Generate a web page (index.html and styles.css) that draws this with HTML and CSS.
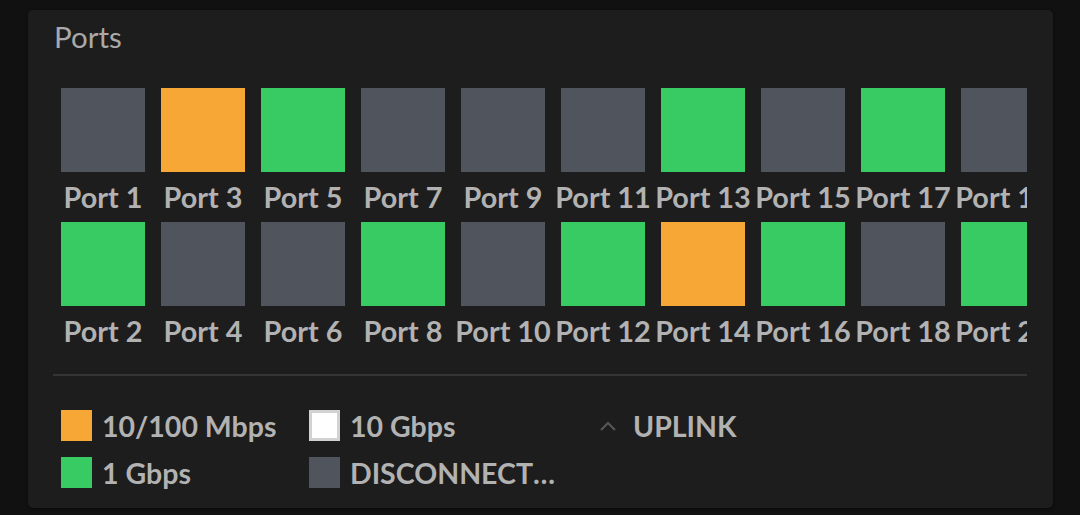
FILE: index.html
```html
<!DOCTYPE html>
<html>
<head>
<meta charset="utf-8">
<link rel="stylesheet" href="styles.css">
</head>
<body>
<div class="card">
  <div class="title">Ports</div>
  <div class="ports">
    <div class="port"><div class="sq off"></div><div class="lbl">Port 1</div></div>
    <div class="port"><div class="sq g1"></div><div class="lbl">Port 2</div></div>
    <div class="port"><div class="sq m100"></div><div class="lbl">Port 3</div></div>
    <div class="port"><div class="sq off"></div><div class="lbl">Port 4</div></div>
    <div class="port"><div class="sq g1"></div><div class="lbl">Port 5</div></div>
    <div class="port"><div class="sq off"></div><div class="lbl">Port 6</div></div>
    <div class="port"><div class="sq off"></div><div class="lbl">Port 7</div></div>
    <div class="port"><div class="sq g1"></div><div class="lbl">Port 8</div></div>
    <div class="port"><div class="sq off"></div><div class="lbl">Port 9</div></div>
    <div class="port"><div class="sq off"></div><div class="lbl">Port 10</div></div>
    <div class="port"><div class="sq off"></div><div class="lbl">Port 11</div></div>
    <div class="port"><div class="sq g1"></div><div class="lbl">Port 12</div></div>
    <div class="port"><div class="sq g1"></div><div class="lbl">Port 13</div></div>
    <div class="port"><div class="sq m100"></div><div class="lbl">Port 14</div></div>
    <div class="port"><div class="sq off"></div><div class="lbl">Port 15</div></div>
    <div class="port"><div class="sq g1"></div><div class="lbl">Port 16</div></div>
    <div class="port"><div class="sq g1"></div><div class="lbl">Port 17</div></div>
    <div class="port"><div class="sq off"></div><div class="lbl">Port 18</div></div>
    <div class="port"><div class="sq off"></div><div class="lbl">Port 19</div></div>
    <div class="port"><div class="sq g1"></div><div class="lbl">Port 20</div></div>
  </div>
  <div class="divider"></div>
  <div class="legend">
    <div class="item"><span class="sw m100"></span><span class="txt">10/100 Mbps</span></div>
    <div class="item"><span class="sw g10"></span><span class="txt">10 Gbps</span></div>
    <div class="item uplink"><span class="icon"><svg width="18" height="12" viewBox="0 0 18 12"><path d="M2 10 L9 3 L16 10" fill="none" stroke="#555" stroke-width="2.2"/></svg></span><span class="txt">UPLINK</span></div>
    <div class="item"><span class="sw g1"></span><span class="txt">1 Gbps</span></div>
    <div class="item"><span class="sw off"></span><span class="txt">DISCONNECTED</span></div>
  </div>
</div>
</body>
</html>
```
FILE: styles.css
```css
html, body {
  margin: 0;
  padding: 0;
  background: #111111;
  width: 1080px;
  height: 515px;
  overflow: hidden;
  font-family: Lato, "Open Sans", sans-serif;
}
body {
  padding: 10px 27px 0 28px;
  box-sizing: border-box;
}
.card {
  width: 1025px;
  height: 498px;
  box-sizing: border-box;
  background: #1d1d1d;
  border-radius: 5px;
  padding: 10px 26px 0 25px;
  box-shadow: 0 1px 3px rgba(0,0,0,0.5);
}
.title {
  font-size: 29.5px;
  line-height: 34px;
  color: #a9a9a9;
  font-weight: 400;
  margin-left: 1px;
}
.ports {
  margin-top: 26px;
  display: grid;
  grid-template-rows: 142px 134px;
  grid-auto-flow: column;
  grid-auto-columns: 100px;
  overflow: hidden;
  width: 974px;
}
.port {
  padding: 8px 8px 0;
  width: 84px;
}
.ports .port:nth-child(even) { padding-top: 0; }
.sq {
  width: 84px;
  height: 84px;
}
.lbl {
  height: 50px;
  line-height: 50px;
  font-size: 28.8px;
  font-weight: 700;
  color: #b2b2b2;
  text-align: center;
  white-space: nowrap;
  display: flex;
  justify-content: center;
  width: 84px;
}
.off { background: #50545c; }
.g1 { background: #39cb63; }
.m100 { background: #f6a735; }
.g10 { background: #ffffff; border: 3px solid #d2d2d2; box-sizing: border-box; }
.divider {
  margin-top: 18px;
  height: 2px;
  background: #343434;
  width: 974px;
}
.legend {
  margin-top: 26px;
  padding-left: 8px;
  display: grid;
  grid-template-columns: 248px 248px 1fr;
  grid-auto-rows: 47px;
}
.item {
  display: flex;
  align-items: center;
  gap: 10px;
  min-width: 0;
  font-size: 28.5px;
  font-weight: 700;
  color: #b2b2b2;
}
.sw {
  flex: none;
  width: 31px;
  height: 31px;
}
.txt {
  white-space: nowrap;
  overflow: hidden;
  text-overflow: ellipsis;
  min-width: 0;
}
.uplink { margin-left: 35px; gap: 10px; }
.icon {
  flex: none;
  width: 31px;
  height: 31px;
  display: flex;
  align-items: center;
  justify-content: center;
}
```
